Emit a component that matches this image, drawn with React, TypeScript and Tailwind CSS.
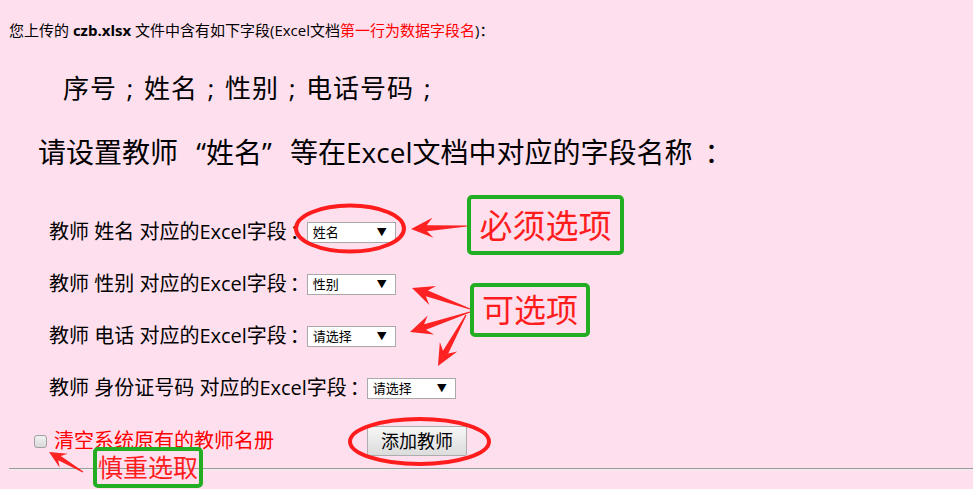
import React from "react";

const FONT = { fontFamily: '"Open Sans", "Noto Sans CJK SC", sans-serif' };

function arrowPoints(x1: number, y1: number, x2: number, y2: number, hl = 20, hw = 9, sw = 3.5) {
  const dx = x2 - x1;
  const dy = y2 - y1;
  const len = Math.hypot(dx, dy);
  const ux = dx / len;
  const uy = dy / len;
  const px = -uy;
  const py = ux;
  const bx = x2 - ux * hl;
  const by = y2 - uy * hl;
  const nx = x2 - ux * (hl * 0.72);
  const ny = y2 - uy * (hl * 0.72);
  const pts: [number, number][] = [
    [x2, y2],
    [bx + px * hw, by + py * hw],
    [nx + px * sw, ny + py * sw],
    [x1 + px * 0.6, y1 + py * 0.6],
    [x1 - px * 0.6, y1 - py * 0.6],
    [nx - px * sw, ny - py * sw],
    [bx - px * hw, by - py * hw],
  ];
  return pts.map((p) => p.join(",")).join(" ");
}

function FakeSelect({ value, w = 89 }: { value: string; w?: number }) {
  return (
    <div
      className="h-[21px] bg-white border border-[#a9a9a9] flex items-center justify-between pl-[5px] pr-[8px] text-[13px] leading-none text-black"
      style={{ width: w }}
    >
      <span>{value}</span>
      <span className="text-[10px]">▼</span>
    </div>
  );
}

function Row({ field, value }: { field: string; value: string }) {
  return (
    <div className="h-[52px] pl-[49px] flex items-center text-[20px] text-black">
      <span>
        教师 {field} 对应的Excel字段<span className="inline-block w-[20px] pl-[3px]">：</span>
      </span>
      <FakeSelect value={value} />
    </div>
  );
}

export default function App() {
  return (
    <div className="relative w-full min-h-screen bg-[#fedfee] overflow-hidden" style={FONT}>
      <div className="pt-[19px] pl-[9px] text-[15px] leading-[22px] text-black">
        您上传的 <b>czb.xlsx</b> 文件中含有如下字段(Excel文档<span className="text-[#ff0000]">第一行为数据字段名</span>)：
      </div>
      <div className="mt-[29px] pl-[63px] text-[26px] leading-[36px] text-black tracking-[1px]">
        序号<span className="inline-block w-[27px] text-center">;</span>姓名<span className="inline-block w-[27px] text-center">;</span>性别<span className="inline-block w-[27px] text-center">;</span>电话号码<span className="inline-block w-[27px] text-center">;</span>
      </div>
      <div className="mt-[26px] pl-[38px] text-[28px] leading-[40px] text-black whitespace-nowrap">
        请设置教师<span className="inline-block w-[28px] text-right">“</span>姓名<span className="inline-block w-[28px] text-left">”</span>等在Excel文档中对应的字段名称<span className="inline-block pl-[12px]">：</span>
      </div>
      <div className="mt-[34px]">
        <Row field="姓名" value="姓名" />
        <Row field="性别" value="性别" />
        <Row field="电话" value="请选择" />
        <Row field="身份证号码" value="请选择" />
      </div>
      <div className="h-[54px] flex items-center">
        <div className="pl-[34px] flex items-center">
          <div className="w-[13px] h-[13px] rounded-[3px] border border-[#a0a0a0] bg-gradient-to-b from-[#f2f2f2] to-[#d9d9d9]" />
          <span className="ml-[7px] text-[20px] leading-none text-[#ff0000]">清空系统原有的教师名册</span>
        </div>
        <div className="ml-[93px] w-[100px] h-[30px] border border-[#adadad] rounded-[2px] bg-gradient-to-b from-[#f6f6f6] to-[#dcdcdc] flex items-center justify-center text-[18px] text-black">
          添加教师
        </div>
      </div>
      <div className="ml-[9px] h-[2px] border-t border-[#9a9a9a] border-b border-b-[#eeeeee]" />

      {/* annotations */}
      <svg className="absolute left-0 top-0 pointer-events-none" width="973" height="489">
        <ellipse cx="350" cy="228.5" rx="54" ry="23" fill="none" stroke="#ff1c1c" strokeWidth="4" />
        <ellipse cx="419.5" cy="441.5" rx="69.5" ry="22.5" fill="none" stroke="#ff1c1c" strokeWidth="4" />
        <polygon points={arrowPoints(467, 226, 411, 229, 22, 10, 3)} fill="#ff2222" />
        <polygon points={arrowPoints(470, 309, 412, 288, 22, 10, 3)} fill="#ff2222" />
        <polygon points={arrowPoints(470, 312, 410, 332, 22, 10, 3)} fill="#ff2222" />
        <polygon points={arrowPoints(466, 315, 438, 366, 22, 10, 3)} fill="#ff2222" />
        <polygon points={arrowPoints(83, 472, 49, 452, 17, 8, 2.5)} fill="#ff2222" />
      </svg>
      <div className="absolute left-[467px] top-[195px] w-[157px] h-[60px] border-[4px] border-[#22ad22] rounded-[5px] flex items-center justify-center text-[33px] leading-none text-[#ff1c1c]">
        必须选项
      </div>
      <div className="absolute left-[470px] top-[283px] w-[120px] h-[54px] border-[4px] border-[#22ad22] rounded-[5px] flex items-center justify-center text-[32px] leading-none text-[#ff1c1c]">
        可选项
      </div>
      <div className="absolute left-[93px] top-[447px] w-[110px] h-[41px] border-[4px] border-[#22ad22] rounded-[5px] flex items-center justify-center text-[25px] leading-none text-[#ff1c1c]">
        慎重选取
      </div>
    </div>
  );
}
